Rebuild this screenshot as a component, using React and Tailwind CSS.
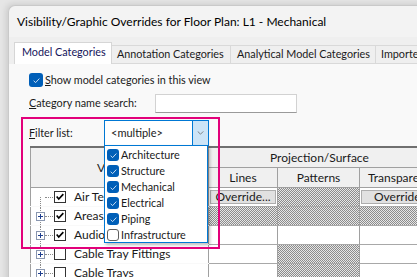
const hatch =
  "bg-[image:repeating-conic-gradient(#8c8c8c_0_25%,#e6e6e6_0_50%)] bg-size-[2px_2px]";

function BlueCheck({ checked = true, size = "w-[12px] h-[12px]" }) {
  if (!checked) {
    return <div className={`${size} rounded-[3px] border border-[#5f5f5f] bg-white shrink-0`} />;
  }
  return (
    <div className={`${size} rounded-[3px] bg-[#005fb8] flex items-center justify-center shrink-0`}>
      <svg viewBox="0 0 12 12" className="w-[9px] h-[9px]">
        <path d="M2.2 6.3 L4.8 8.8 L9.8 3.4" fill="none" stroke="#dbe9f7" strokeWidth="1.2" />
      </svg>
    </div>
  );
}

function ClassicCheck({ checked }) {
  return (
    <div className="w-[12px] h-[12px] border border-[#333] bg-white flex items-center justify-center shrink-0">
      {checked && (
        <svg viewBox="0 0 12 12" className="w-[10px] h-[10px]">
          <path d="M2 5.5 L4.5 8.5 L10 2.5" fill="none" stroke="#000" strokeWidth="2" />
        </svg>
      )}
    </div>
  );
}

function OverrideBtn({ wide }) {
  return (
    <div className="h-full flex items-center px-px">
      <div
        className={`w-full h-[14px] bg-[#e1e1e1] border border-[#adadad] flex items-center text-[12px] leading-none whitespace-nowrap ${
          wide ? "pl-[12px]" : "justify-center"
        }`}
      >
        Override...
      </div>
    </div>
  );
}

const rows = [
  { name: "Air Terminals", checked: true, plus: false, first: true, cells: ["btn", "hatch", "btn"] },
  { name: "Areas", checked: true, plus: true, cells: ["hatch", "hatch", "hatch"] },
  { name: "Audio Visual Devices", checked: true, plus: true, cells: ["", "", ""] },
  { name: "Cable Tray Fittings", checked: false, plus: true, cells: ["", "hatch", ""] },
  { name: "Cable Trays", checked: false, plus: true, cells: ["", "hatch", ""] },
];

const filters = [
  ["Architecture", true],
  ["Structure", true],
  ["Mechanical", true],
  ["Electrical", true],
  ["Piping", true],
  ["Infrastructure", false],
];

function TreeCell({ row }) {
  return (
    <div className="h-[18px] bg-white border-l border-r border-[#a0a0a0] flex items-center pl-[5px] overflow-hidden">
      <div className="relative w-[9px] h-full shrink-0">
        <div
          className={`absolute left-[4px] bottom-0 border-l border-dotted border-[#8a8a8a] ${
            row.first ? "top-[9px]" : "top-0"
          }`}
        />
        {row.plus && (
          <div className="absolute left-0 top-[5px] w-[9px] h-[9px] border border-[#8a97b0] bg-white flex items-center justify-center">
            <svg viewBox="0 0 7 7" className="w-[7px] h-[7px]">
              <path d="M1 3.5 H6 M3.5 1 V6" stroke="#1f3f8f" strokeWidth="1" />
            </svg>
          </div>
        )}
      </div>
      <div className="w-[8px] border-t border-dotted border-[#8a8a8a] shrink-0" />
      <div className="ml-px">
        <ClassicCheck checked={row.checked} />
      </div>
      <span className="ml-[8px] text-[12px] whitespace-nowrap">{row.name}</span>
    </div>
  );
}

function DataCell({ kind, last }) {
  const base = `h-[18px] ${last ? "" : "border-r border-[#a0a0a0]"}`;
  if (kind === "btn") return <div className={`${base} bg-white`}><OverrideBtn wide={last} /></div>;
  if (kind === "hatch") return <div className={`${base} ${hatch}`} />;
  return <div className={`${base} bg-white`} />;
}

export default function App() {
  return (
    <div className="relative w-[417px] h-[277px] overflow-hidden bg-[#e6e6e6] pl-[8px] pt-[5px] font-['Lato',sans-serif] text-[#1a1a1a]">
      <div className="w-[420px] h-[280px] rounded-tl-[7px] bg-[#f3f3f3] border-l border-t border-[#c9c9c9] shadow-[-2px_-1px_6px_rgba(0,0,0,0.12)] flex flex-col">
        {/* title */}
        <div className="h-[31px] flex items-center pl-[8px] text-[12px] text-black whitespace-nowrap">
          Visibility/Graphic Overrides for Floor Plan: L1 - Mechanical
        </div>

        {/* tabs */}
        <div className="h-[27px] bg-[#efefef] flex items-end pl-[5px] text-[10.8px] whitespace-nowrap overflow-hidden">
          <div className="w-[98px] h-[22px] shrink-0 bg-white border border-b-0 border-[#d6d6d6] flex items-center pl-[7px] pb-[2px] text-[#14145a]">
            Model Categories
          </div>
          <div className="w-[119px] h-[19px] shrink-0 border-t border-r border-b border-[#d9d9d9] flex items-center pl-[5px]">
            Annotation Categories
          </div>
          <div className="w-[145px] h-[19px] shrink-0 border-t border-r border-b border-[#d9d9d9] flex items-center pl-[6px]">
            Analytical Model Categories
          </div>
          <div className="w-[110px] h-[19px] shrink-0 border-t border-b border-[#d9d9d9] flex items-center pl-[5px]">
            Imported Categories
          </div>
        </div>

        {/* panel */}
        <div className="flex-1 bg-[#f9f9f9] pl-[20px] text-[10.8px]">
          <div className="mt-[9px] h-[14px] flex items-center">
            <BlueCheck size="w-[14px] h-[14px]" />
            <span className="ml-[2px] whitespace-nowrap">
              <span className="underline">S</span>how model categories in this view
            </span>
          </div>

          <div className="mt-[7px] h-[19px] flex items-center">
            <span className="w-[126px] whitespace-nowrap">
              <span className="underline">C</span>ategory name search:
            </span>
            <div className="w-[142px] h-[19px] bg-white border border-[#d2d2d2] border-b-[#9a9a9a]" />
          </div>

          <div className="mt-[7px] h-[26px] flex items-center">
            <span className="w-[75px] whitespace-nowrap">
              <span className="underline">F</span>ilter list:
            </span>
            <div className="w-[105px] h-[26px] bg-white border border-[#0078d4] flex">
              <div className="flex-1 flex items-center pl-[6px] text-[11px]">&lt;multiple&gt;</div>
              <div className="w-[16px] bg-[#cce4f7] border-l border-[#0078d4] flex items-center justify-center">
                <svg viewBox="0 0 8 5" className="w-[7px] h-[4px]">
                  <path d="M0.5 0.5 L4 4 L7.5 0.5" fill="none" stroke="#6a6a6a" strokeWidth="1" />
                </svg>
              </div>
            </div>
          </div>

          {/* table */}
          <div className="ml-px border-t-2 border-[#707070]">
            <div className="grid grid-cols-[179px_69px_82px_90px]">
              <div className="row-span-2 h-[40px] bg-[#f0f0f0] border-l border-r border-b border-[#a0a0a0] flex items-center justify-center text-[12px]">
                Visibility
              </div>
              <div className="col-span-3 h-[20px] bg-[#f0f0f0] border-b border-[#a0a0a0] flex items-center pl-[61px] text-[12px]">
                Projection/Surface
              </div>
              <div className="h-[20px] bg-[#f0f0f0] border-r border-b border-[#a0a0a0] flex items-center justify-center text-[12px]">
                Lines
              </div>
              <div className="h-[20px] bg-[#f0f0f0] border-r border-b border-[#a0a0a0] flex items-center justify-center text-[12px]">
                Patterns
              </div>
              <div className="h-[20px] bg-[#f0f0f0] border-b border-[#a0a0a0] flex items-center pl-[8px] text-[12px] whitespace-nowrap overflow-hidden">
                Transparency
              </div>
              {rows.map((r) => (
                <div key={r.name} className="contents">
                  <TreeCell row={r} />
                  {r.cells.map((c, i) => (
                    <div key={i} className="border-b border-[#a8a8a8]">
                      <DataCell kind={c} last={i === 2} />
                    </div>
                  ))}
                </div>
              ))}
            </div>
          </div>
        </div>
      </div>

      {/* dropdown list */}
      <div className="absolute left-[104px] top-[145px] w-[104px] h-[98px] bg-white border border-[#0078d4] shadow-[2px_2px_3px_rgba(0,0,0,0.25)] pt-px text-[10.8px]">
        {filters.map(([name, on]) => (
          <div key={name} className="h-[16px] flex items-center pl-[2px]">
            <BlueCheck checked={on} />
            <span className="ml-[2px] whitespace-nowrap">{name}</span>
          </div>
        ))}
      </div>

      {/* highlight annotation */}
      <div className="absolute left-[21px] top-[117px] w-[199px] h-[132px] border-2 border-[#e2007a] pointer-events-none" />
    </div>
  );
}
